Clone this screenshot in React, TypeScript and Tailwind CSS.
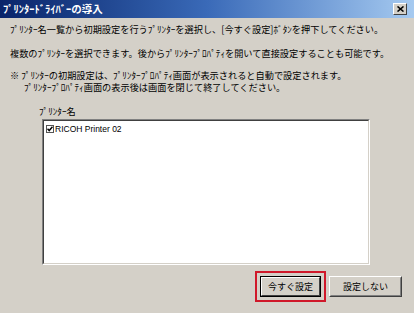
import React from "react";

const jp = { fontFamily: '"Noto Sans CJK JP", "MS UI Gothic", sans-serif' };

export default function App() {
  return (
    <div
      className="w-[414px] h-[313px] bg-[#d4d0c8] flex flex-col overflow-hidden text-black"
      style={jp}
    >
      {/* Title bar */}
      <div className="h-[18px] flex items-center justify-between pl-[3px] pr-[7px] bg-gradient-to-r from-[#0a246a] via-[#3a6ab8] to-[#a6caf0]">
        <span className="text-white font-bold text-[10.5px] leading-[12px] whitespace-nowrap">
          ﾌﾟﾘﾝﾀｰﾄﾞﾗｲﾊﾞｰの導入
        </span>
        <div className="w-[14px] h-[12px] bg-[#d4d0c8] border border-t-white border-l-white border-b-[#404040] border-r-[#404040] flex items-center justify-center">
          <svg width="7" height="6" viewBox="0 0 7 6">
            <path d="M0.5 0.5 L6.5 5.5 M6.5 0.5 L0.5 5.5" stroke="#000" strokeWidth="1.6" />
          </svg>
        </div>
      </div>

      {/* Body */}
      <div className="flex flex-col pl-[10px] pt-[5px] text-[9.2px] whitespace-nowrap">
        <div className="leading-[12px] h-[12px]">
          ﾌﾟﾘﾝﾀｰ名一覧から初期設定を行うﾌﾟﾘﾝﾀｰを選択し、[今すぐ設定]ﾎﾞﾀﾝを押下してください。
        </div>
        <div className="leading-[12px] h-[12px] mt-[12px]">
          複数のﾌﾟﾘﾝﾀｰを選択できます。後からﾌﾟﾘﾝﾀｰﾌﾟﾛﾊﾟﾃｨを開いて直接設定することも可能です。
        </div>
        <div className="leading-[12px] h-[12px] mt-[10px]">
          ※ ﾌﾟﾘﾝﾀｰの初期設定は、ﾌﾟﾘﾝﾀｰﾌﾟﾛﾊﾟﾃｨ画面が表示されると自動で設定されます。
        </div>
        <div className="leading-[12px] h-[12px] pl-[14px]">
          ﾌﾟﾘﾝﾀｰﾌﾟﾛﾊﾟﾃｨ画面の表示後は画面を閉じて終了してください。
        </div>
        <div className="leading-[12px] h-[12px] mt-[12px] pl-[29px]">ﾌﾟﾘﾝﾀｰ名</div>

        {/* List box */}
        <div className="mt-[2px] ml-[32px] w-[328px] h-[146px] border border-t-[#808080] border-l-[#808080] border-b-white border-r-white">
          <div className="w-full h-full bg-white border border-t-[#404040] border-l-[#404040] border-b-[#d4d0c8] border-r-[#d4d0c8] pt-[3px] pl-[2px]">
            <div className="flex items-center gap-[1px] h-[10px]">
              <span className="w-[8px] h-[8px] border border-[#555] bg-white flex items-center justify-center">
                <svg width="6" height="6" viewBox="0 0 6 6">
                  <path d="M0.5 2.8 L2.2 4.6 L5.5 0.8" stroke="#000" strokeWidth="1.5" fill="none" />
                </svg>
              </span>
              <span
                className="text-[8.5px] leading-[10px]"
                style={{ fontFamily: '"Liberation Sans", Arial, sans-serif' }}
              >
                RICOH Printer 02
              </span>
            </div>
          </div>
        </div>

        {/* Buttons */}
        <div className="mt-[6px] flex justify-end items-center gap-[3px] pr-[12px]">
          <div className="border-2 border-[#d0182a] p-[3px]">
            <div className="w-[61px] h-[21px] border border-black">
              <div className="w-full h-full border border-t-white border-l-white border-b-[#404040] border-r-[#404040] bg-[#d4d0c8] flex items-center justify-center text-[9px]">
                今すぐ設定
              </div>
            </div>
          </div>
          <div className="w-[73px] h-[21px] border border-t-white border-l-white border-b-[#404040] border-r-[#404040]">
            <div className="w-full h-full border border-transparent border-b-[#808080] border-r-[#808080] bg-[#d4d0c8] flex items-center justify-center text-[9px]">
              設定しない
            </div>
          </div>
        </div>
      </div>
    </div>
  );
}
